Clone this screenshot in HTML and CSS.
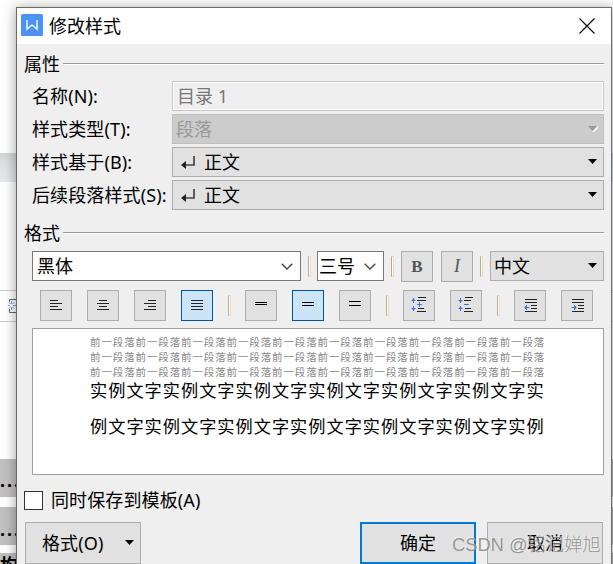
FILE: index.html
```html
<!DOCTYPE html>
<html lang="zh-CN">
<head>
<meta charset="utf-8">
<title>修改样式</title>
<link rel="stylesheet" href="styles.css">
</head>
<body>
<div class="page">
  <div class="backdrop">
    <div class="band ribbon"></div>
    <div class="band ruler"><svg width="17" height="30" fill="none"><path d="M17 8.500H9.500V11M9.500 18v3.500H17" stroke="#666"/><path d="M11.500 10v3M11.500 16v3M8 14.500h2M13 14.500h3M9 11.500l1.500 1.500M14 11.500l-1.500 1.500M9 17.500l1.500-1.500M14 17.500l-1.500-1.500" stroke="#6da0ee"/></svg></div>
    <div class="band line-a">...</div>
    <div class="band line-b">...</div>
    <div class="band line-c">构</div>
  </div>
  <main class="dialog">
    <header class="title">
      <svg class="logo" width="22" height="22"><rect width="22" height="22" rx="1.500" fill="#4c92f5"/><path d="M6 6v9l5-4 5 4V6" fill="none" stroke="#e8f1ff" stroke-width="1.600"/></svg>
      <h1>修改样式</h1>
      <svg class="close" width="16" height="16"><path d="M.5.5l15 15M15.500.5l-15 15" stroke="#000" stroke-width="1.100"/></svg>
    </header>
    <div class="legend first"><span>属性</span><i></i></div>
    <div class="fields">
      <label>名称(N):</label><div class="box readonly">目录 1</div>
      <label>样式类型(T):</label><div class="box disabled">段落<svg class="arrow" width="10" height="6"><path d="M4 6h2l4-4V0z" fill="#fff"/><path d="M0 0h9L4.500 5z" fill="#999"/></svg></div>
      <label>样式基于(B):</label><div class="box"><svg class="ret" width="14" height="14"><path d="M13 0v9H3" fill="none" stroke="#444" stroke-width="1.700"/><path d="M0 9l5-4v8z" fill="#222"/></svg>正文<svg class="arrow" width="10" height="6"><path d="M0 0h9L4.500 5z"/></svg></div>
      <label>后续段落样式(S):</label><div class="box"><svg class="ret" width="14" height="14"><path d="M13 0v9H3" fill="none" stroke="#444" stroke-width="1.700"/><path d="M0 9l5-4v8z" fill="#222"/></svg>正文<svg class="arrow" width="10" height="6"><path d="M0 0h9L4.500 5z"/></svg></div>
    </div>
    <div class="legend second"><span>格式</span><i></i></div>
    <div class="fontrow">
      <div class="edit face">黑体<svg width="12" height="7"><path d="M.7.7L6 6 11.300.7" fill="none" stroke="#444" stroke-width="1.300"/></svg></div>
      <b class="sep"></b>
      <div class="edit size">三号<svg width="12" height="7"><path d="M.7.7L6 6 11.300.7" fill="none" stroke="#444" stroke-width="1.300"/></svg></div>
      <b class="sep"></b>
      <button class="tool bold">B</button>
      <button class="tool italic">I</button>
      <b class="sep"></b>
      <div class="box lang">中文<svg class="arrow" width="10" height="6"><path d="M0 0h9L4.500 5z"/></svg></div>
    </div>
    <div class="tools">
      <button class="tool"><svg><path d="M9 9.500h8M9 12.500h12M9 15.500h8M9 18.500h12"/></svg></button>
      <button class="tool"><svg><path d="M11 9.500h8M9 12.500h12M11 15.500h8M9 18.500h12"/></svg></button>
      <button class="tool"><svg><path d="M13 9.500h8M9 12.500h12M13 15.500h8M9 18.500h12"/></svg></button>
      <button class="tool on"><svg><path d="M9 9.500h12M9 12.500h12M9 15.500h12M9 18.500h12"/></svg></button>
      <b class="sep"></b>
      <button class="tool"><svg class="black"><path d="M9 11.500h12M9 13.500h12"/></svg></button>
      <button class="tool on"><svg class="black"><path d="M9 11.500h12M9 14.500h12"/></svg></button>
      <button class="tool"><svg class="black"><path d="M9 10.500h12M9 14.500h12"/></svg></button>
      <b class="sep"></b>
      <button class="tool"><svg><path d="M14 6.500h8M13 9.500h9M14 17.500h6M13 20.500h9"/><path class="blue" d="M9.500 7v5M7.500 9.500h4M8.500 8.500h2M9.500 15v5M7.500 17.500h4M8.500 18.500h2M15.500 11v5M13 13.500h5"/></svg></button>
      <button class="tool"><svg><path d="M14 6.500h8M13 9.500h7M14 17.500h6M13 20.500h9"/><path class="blue" d="M9.500 7v5M7.500 9.500h4M8.500 10.500h2M9.500 15v5M7.500 17.500h4M8.500 16.500h2M13 13.500h5"/></svg></button>
      <b class="sep"></b>
      <button class="tool"><svg><path d="M10 8.500h12M10 11.500h12M16 14.500h6M16 17.500h6M10 20.500h12"/><path class="blue" d="M9.500 16.500h5M11.500 14v5M10.500 15v3"/></svg></button>
      <button class="tool"><svg><path d="M10 8.500h12M10 11.500h12M16 14.500h6M16 17.500h6M10 20.500h12"/><path class="blue" d="M9.500 16.500h5M12.500 14v5M13.500 15v3"/></svg></button>
    </div>
    <div class="preview">
      <p class="prev">前一段落前一段落前一段落前一段落前一段落前一段落前一段落前一段落前一段落前一段落<br>前一段落前一段落前一段落前一段落前一段落前一段落前一段落前一段落前一段落前一段落<br>前一段落前一段落前一段落前一段落前一段落前一段落前一段落前一段落前一段落前一段落</p>
      <p class="sample">实例文字实例文字实例文字实例文字实例文字实例文字实<br>例文字实例文字实例文字实例文字实例文字实例文字实例</p>
    </div>
    <label class="save"><span class="check"></span>同时保存到模板(A)</label>
    <footer class="actions">
      <button class="btn format">格式(O)<svg width="10" height="6"><path d="M0 0h9L4.500 5z"/></svg></button>
      <button class="btn ok">确定</button>
      <button class="btn">取消</button>
    </footer>
  </main>
  <div class="watermark">CSDN @铭记婵旭</div>
</div>
</body>
</html>
```
FILE: styles.css
```css
* { box-sizing: border-box; }
body { margin: 0; overflow: hidden; font: 18px/28px "Noto Sans", "Noto Sans CJK SC", sans-serif; color: #000; }
p, h1 { margin: 0; }
svg { display: block; flex: none; }
button { font: inherit; color: inherit; padding: 0; border-radius: 0; }

.page { position: relative; width: 613px; height: 564px; overflow: hidden; background: #fff; }

/* Document window behind the dialog */
.backdrop { display: flex; flex-direction: column; height: 564px; overflow: hidden; font-weight: 700; }
.band { flex: none; width: 613px; overflow: hidden; }
.ribbon { margin-top: 153px; height: 29px; background: linear-gradient(#d5d6d8, #e3e4e7 60%, #e6e8ec); }
.ruler { margin-top: 108px; height: 32px; border-top: 1px solid #ccc; border-bottom: 1px solid #ccc; }
.line-a { margin-top: 137px; height: 38px; background: #c0c0c0; line-height: 43px; letter-spacing: 2px; }
.line-b { margin-top: 10px; height: 38px; background: #c0c0c0; line-height: 44px; letter-spacing: 2px; }
.line-c { margin-top: 8px; height: 11px; background: #c0c0c0; line-height: 24px; }

.dialog { position: absolute; left: 16px; top: 7px; width: 596px; height: 580px; background: #efefef; border: 1px solid #6b6b6b; box-shadow: 0 1px 12px rgba(0,0,0,.4); }

.title { display: flex; align-items: center; height: 36px; background: #fff; padding: 0 16px 0 4px; }
.logo { margin-top: -2px; }
.title h1 { font-size: 18px; font-weight: 400; margin-left: 6px; flex: 1; }
.close { margin-top: -1px; }

.legend { display: flex; align-items: center; height: 28px; padding: 0 7px; gap: 3px; }
.legend.first { margin-top: 6px; }
.legend.second { margin-top: 9px; }
.legend span { margin-top: -1px; }
.legend i { flex: 1; height: 2px; background: #999; border-bottom: 1px solid #fff; }

.fields { display: grid; grid-template-columns: 140px 432px; grid-auto-rows: 30px; row-gap: 3px; margin: 3px 0 0 15px; align-items: stretch; line-height: 31px; }
.fields label { letter-spacing: .12px; }
.box { display: flex; align-items: center; background: #e1e1e1; border: 1px solid #adadad; padding: 0 6px 0 8px; }
.box .arrow { margin-left: auto; margin-right: -1px; }
.ret { margin-right: 9px; margin-top: 1px; }
.readonly { background: #efefef; border-color: #c8c8c8; box-shadow: inset 0 0 0 1px #fff; color: #777; padding-left: 4px; }
.disabled { background: #ccc; border-color: #bfbfbf; color: #999; padding-left: 3px; }

.fontrow { display: flex; align-items: flex-start; height: 31px; margin: 4px 7px 0 15px; }
.edit { display: flex; align-items: center; justify-content: space-between; height: 30px; background: #fff; border: 1px solid #7a7a7a; }
.face { width: 269px; padding: 0 7px 0 4px; }
.size { width: 67px; padding: 0 7px 0 1px; }
.fontrow .box { height: 30px; }
.lang { width: 114px; padding-left: 3px; margin-left: auto; }
.sep { width: 3px; height: 21px; flex: none; background: #fffdf5; border: 1px solid #e2dcc8; border-left-color: #b8ac90; }
.fontrow .sep { margin: 5px 6px 0 7px; }
.fontrow .size + .sep { margin-right: 7px; }
.tool { width: 32px; height: 31px; flex: none; background: #e1e1e1; border: 1px solid #adadad; }
.tool.on { background: #cce4f7; border-color: #005499; }
.tool svg { width: 30px; height: 29px; fill: none; stroke: #222; stroke-width: 1; }
.tool svg.black { stroke: #000; }
.tool .blue { stroke: #3f78e0; }
.bold { font: 700 17px "Liberation Serif", serif; color: #555; }
.italic { font: italic 18px "Liberation Serif", serif; color: #555; margin-left: 8px; }

.tools { display: flex; align-items: flex-start; gap: 15px; height: 31px; margin: 8px 0 0 23px; }
.tools .sep { margin-top: 5px; margin-right: -1px; }

.preview { height: 147px; margin: 7px 7px 0 15px; padding: 5px 0 0 57px; background: #fff; border: 1px solid #a0a0a0; font-family: "Noto Sans CJK SC", sans-serif; white-space: nowrap; }
.prev { font-size: 10.5px; letter-spacing: .88px; line-height: 15px; color: #888; }
.sample { font-size: 17.2px; letter-spacing: 1px; line-height: 36px; margin-top: -7px; }

.save { display: flex; align-items: center; height: 30px; margin: 10px 0 0 7px; letter-spacing: .12px; }
.check { width: 19px; height: 19px; margin-right: 8px; background: #fff; border: 1px solid #333; }

.actions { display: flex; margin: 7px 8px 0; gap: 11px; }
.btn { display: flex; align-items: center; justify-content: center; width: 116px; height: 42px; background: #e1e1e1; border: 1px solid #adadad; }
.format { margin-right: auto; justify-content: space-between; padding: 0 5px 0 16px; letter-spacing: .12px; }
.ok { border: 2px solid #0078d7; }

.watermark { position: absolute; left: 452px; top: 531px; white-space: nowrap; font: 300 18.300px/28px "Liberation Sans", "Noto Sans CJK SC", sans-serif; color: rgba(140,140,140,.9); text-shadow: -1px -1px 0 rgba(255,255,255,.5); }
```
